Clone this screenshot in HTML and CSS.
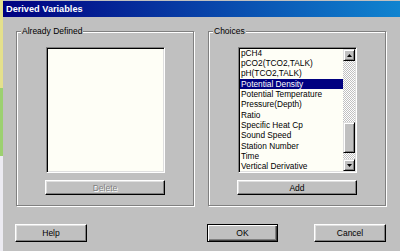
FILE: index.html
```html
<!DOCTYPE html>
<html>

<head>
    <title>Derived Variables</title>
    <link rel="stylesheet" href="styles.css">
</head>

<body>
    <div class="desktop"></div>
    <div class="window">
        <div class="title-bar">Derived Variables</div>

        <div class="groups">
            <div class="group">
                <span class="group-label">Already Defined</span>
                <div class="list-box"></div>
                <button class="btn btn-wide" disabled>Delete</button>
            </div>
            <div class="group">
                <span class="group-label">Choices</span>
                <div class="list-box choices">
                    <ul class="items">
                        <li>pCH4</li>
                        <li>pCO2(TCO2,TALK)</li>
                        <li>pH(TCO2,TALK)</li>
                        <li class="selected">Potential Density</li>
                        <li>Potential Temperature</li>
                        <li>Pressure(Depth)</li>
                        <li>Ratio</li>
                        <li>Specific Heat Cp</li>
                        <li>Sound Speed</li>
                        <li>Station Number</li>
                        <li>Time</li>
                        <li>Vertical Derivative</li>
                    </ul>
                    <div class="scrollbar">
                        <div class="arrow">
                            <svg width="5" height="3" viewBox="0 0 5 3"><polygon points="2.5,0 5,3 0,3" fill="#000"/></svg>
                        </div>
                        <div class="track upper"></div>
                        <div class="thumb"></div>
                        <div class="track lower"></div>
                        <div class="arrow">
                            <svg width="5" height="3" viewBox="0 0 5 3"><polygon points="0,0 5,0 2.5,3" fill="#000"/></svg>
                        </div>
                    </div>
                </div>
                <button class="btn btn-wide">Add</button>
            </div>
        </div>

        <div class="footer">
            <button class="btn">Help</button>
            <button class="btn ok">OK</button>
            <button class="btn cancel">Cancel</button>
        </div>
    </div>
</body>

</html>
```

FILE: styles.css
```css
body {
    margin: 0;
    display: flex;
    height: 251px;
    overflow: hidden;
    font-family: "Liberation Sans", Arial, sans-serif;
}

/* strip of desktop showing at the left */
.desktop {
    width: 3px;
    background: linear-gradient(#e4e08c 0 35%, #9cd070 35% 62%, #ecebf2 62%);
}

.window {
    flex: 1;
    background: #c0c0c0;
    padding-top: 1px;
}

.title-bar {
    height: 16px;
    padding-left: 3px;
    background: linear-gradient(to right, #000080, #1084d0);
    color: #fff;
    font-weight: bold;
    font-size: 9.2px;
    line-height: 16px;
}

.groups {
    display: flex;
    gap: 14px;
    margin-top: 14px;
    padding-left: 13px;
}

/* etched frame */
.group {
    width: 178px;
    height: 175px;
    box-sizing: border-box;
    border: 1px solid #808080;
    box-shadow: inset 1px 1px #fff, 1px 1px #fff;
    display: flex;
    flex-direction: column;
    align-items: flex-start;
}

.group-label {
    margin: -6px 0 0 4px;
    padding: 0 1px;
    background: #c0c0c0;
    font-size: 8.5px;
    line-height: 10px;
}

.list-box {
    margin: 11px 0 0 29px;
    width: 119px;
    height: 126px;
    box-sizing: border-box;
    padding: 1px;
    border: 1px solid;
    border-color: #808080 #fff #fff #808080;
    box-shadow: inset 1px 1px #000, inset -1px -1px #dfdfdf;
    background: #fefef6;
}

.choices {
    display: flex;
}

.items {
    flex: 1;
    margin: 0;
    padding: 0;
    list-style: none;
    overflow: hidden;
}

.items li {
    height: 10.36px;
    line-height: 10.36px;
    font-size: 8.3px;
    padding-left: 1px;
    white-space: nowrap;
}

.items li:first-child {
    margin-top: -1.5px;
}

.items .selected {
    background: #000080;
    color: #fff;
}

.scrollbar {
    width: 12px;
    display: flex;
    flex-direction: column;
}

.arrow,
.thumb {
    box-sizing: border-box;
    background: #c0c0c0;
    border: 1px solid;
    border-color: #dfdfdf #000 #000 #dfdfdf;
    box-shadow: inset 1px 1px #fff, inset -1px -1px #808080;
}

.arrow {
    height: 12px;
    display: flex;
    align-items: center;
    justify-content: center;
}

.track {
    background: repeating-conic-gradient(#fff 0 25%, #c0c0c0 0 50%) 0 0 / 2px 2px;
}

.track.upper {
    height: 61px;
}

.thumb {
    height: 31px;
}

.track.lower {
    flex: 1;
}

.btn {
    padding: 0;
    font-family: inherit;
    font-size: 8.5px;
    color: #000;
    background: #c0c0c0;
    border: 1px solid;
    border-color: #fff #000 #000 #fff;
    box-shadow: inset -1px -1px #808080, inset 1px 1px #dfdfdf;
}

.btn:disabled {
    color: #808080;
    text-shadow: 1px 1px #fff;
}

.btn-wide {
    margin: 7px 0 0 28px;
    width: 120px;
    height: 15px;
}

.footer {
    display: flex;
    margin-top: 18px;
    padding: 0 14px 0 12px;
}

.footer .btn {
    width: 72px;
    height: 18px;
}

/* default button gets a black outline */
.footer .ok {
    width: 71px;
    margin-left: 120px;
    border-color: #000;
    box-shadow: inset 1px 1px #fff, inset -1px -1px #404040, inset -2px -2px #808080;
}

.footer .cancel {
    margin-left: auto;
}
```
